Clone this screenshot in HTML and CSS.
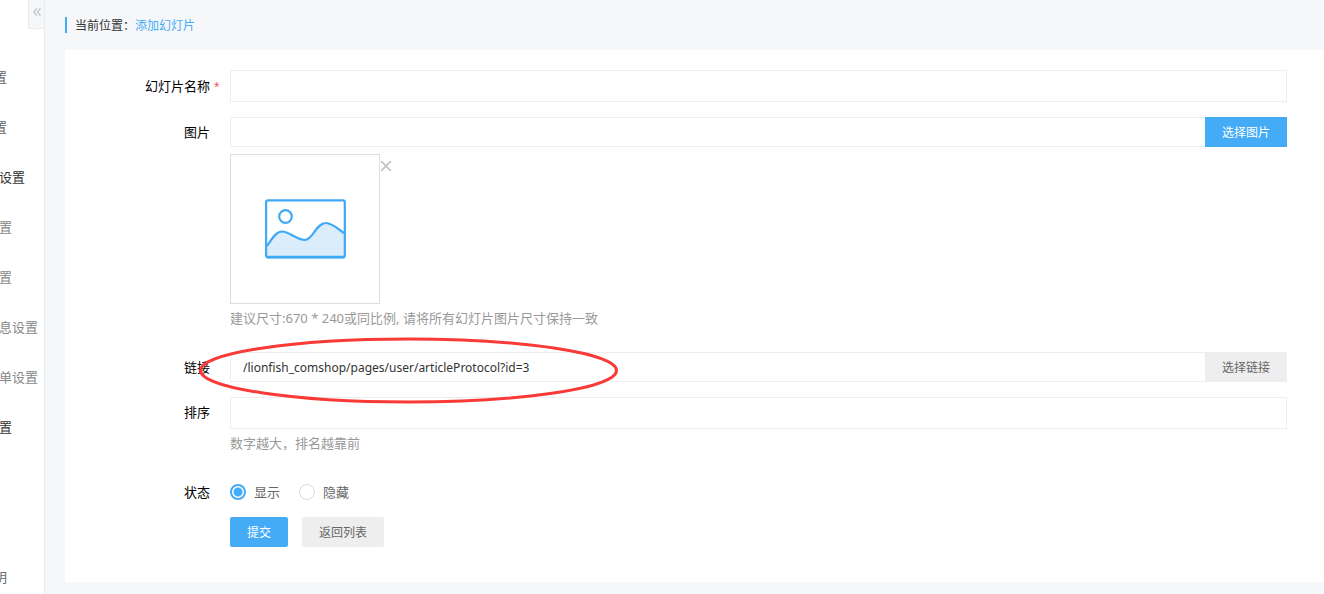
FILE: index.html
```html
<!DOCTYPE html>
<html lang="zh-CN">
<head>
<meta charset="utf-8">
<title>添加幻灯片</title>
<link rel="stylesheet" href="styles.css">
</head>
<body>
<div class="app">
  <aside class="sidebar">
    <nav class="menu">
      <a class="item short" href="#">置</a>
      <a class="item short" href="#">置</a>
      <a class="item medium group" href="#">设置</a>
      <a class="item child" href="#">置</a>
      <a class="item child" href="#">置</a>
      <a class="item long child" href="#">息设置</a>
      <a class="item long child" href="#">单设置</a>
      <a class="item group" href="#">置</a>
      <a class="item short last" href="#">明</a>
    </nav>
    <button class="collapse" type="button" aria-label="收起">
      <svg width="8" height="8" viewBox="0 0 8 8"><path d="M3.8 .3 .7 4l3.1 3.7M7.5 .3 4.4 4l3.1 3.7" fill="none" stroke="#b8c2ca" stroke-width="1.2"/></svg>
    </button>
  </aside>
  <main class="main">
    <div class="crumb"><span>当前位置：</span><a href="#">添加幻灯片</a></div>
    <form class="card">
      <div class="row middle">
        <label class="label" for="name">幻灯片名称<span class="mark">*</span></label>
        <input class="input" id="name" type="text">
      </div>
      <div class="row">
        <label class="label" for="image">图片<span class="mark"></span></label>
        <div class="field">
          <div class="group-input">
            <input class="input" id="image" type="text">
            <button class="btn primary" type="button">选择图片</button>
          </div>
          <div class="preview">
            <div class="thumb">
              <svg width="82" height="60" viewBox="0 0 82 60">
                <path d="M3 47C8 40 12 32.500 18 32.500c7 0 15 8.500 23 8.500C49 41 52 24 62 24c6 0 12 6 18 10v24H3z" fill="#dbecfb"/>
                <path d="M3 47C8 40 12 32.500 18 32.500c7 0 15 8.500 23 8.500C49 41 52 24 62 24c6 0 12 6 18 10" fill="none" stroke="#3fa9f5" stroke-width="2.2"/>
                <rect x="2.100" y="1.300" width="78.700" height="57.200" rx="2" fill="none" stroke="#3fa9f5" stroke-width="2.2"/>
                <path d="M3 58h77" stroke="#3fa9f5" stroke-width="2.600"/>
                <circle cx="21.500" cy="17.500" r="6.300" fill="none" stroke="#3fa9f5" stroke-width="2.2"/>
              </svg>
            </div>
            <button class="remove" type="button" aria-label="删除">
              <svg width="12" height="12" viewBox="0 0 12 12"><path d="M1.200 1.200l9.600 9.600M10.800 1.200l-9.600 9.600" stroke="#c4c4c4" stroke-width="1.800"/></svg>
            </button>
          </div>
          <p class="hint">建议尺寸:670 * 240或同比例, 请将所有幻灯片图片尺寸保持一致</p>
        </div>
      </div>
      <div class="row after-hint">
        <label class="label" for="link">链接<span class="mark"></span></label>
        <div class="group-input">
          <input class="input" id="link" type="text" value="/lionfish_comshop/pages/user/articleProtocol?id=3">
          <button class="btn" type="button">选择链接</button>
          <svg class="ring" width="422" height="68" viewBox="0 0 422 68"><ellipse cx="210.500" cy="33.500" rx="208" ry="31.500" fill="none" stroke="#f93a37" stroke-width="3"/></svg>
        </div>
      </div>
      <div class="row">
        <label class="label" for="sort">排序<span class="mark"></span></label>
        <div class="field">
          <input class="input" id="sort" type="text">
          <p class="hint">数字越大，排名越靠前</p>
        </div>
      </div>
      <div class="row after-hint" role="radiogroup" aria-labelledby="status">
        <span class="label" id="status">状态<span class="mark"></span></span>
        <div class="radios">
          <label class="radio"><input type="radio" name="status" checked>显示</label>
          <label class="radio"><input type="radio" name="status">隐藏</label>
        </div>
      </div>
      <div class="actions">
        <button class="btn primary" type="button">提交</button>
        <button class="btn" type="button">返回列表</button>
      </div>
    </form>
  </main>
</div>
</body>
</html>
```
FILE: styles.css
```css
* { box-sizing: border-box; }

body {
  margin: 0;
  background: #f5f7f9;
  color: #000;
  font: 13px/20px "Noto Sans", "Noto Sans CJK SC", sans-serif;
}

a { text-decoration: none; }
p { margin: 0; }
svg { display: block; }
button, input { font-family: inherit; }

.app {
  display: flex;
  min-height: 100vh;
}

.sidebar {
  position: relative;
  flex: none;
  width: 45px;
  overflow: hidden;
  background: #fff;
  border-right: 1px solid #ebebeb;
}

.menu {
  display: flex;
  flex-direction: column;
  padding-top: 52px;
}

.item {
  display: flex;
  justify-content: flex-end;
  width: 12px;
  color: #666;
  line-height: 50px;
  white-space: nowrap;
}

.item.short { width: 7px; }
.item.medium { width: 25px; }
.item.long { width: 38px; }
.item.group { color: #333; }
.item.child { color: #888; }
.item.last { margin-top: 100px; }

.collapse {
  position: absolute;
  top: 0;
  right: -1px;
  width: 17px;
  height: 29px;
  padding: 0 0 4px 4px;
  background: #f5f7f9;
  border: 1px solid #ebebeb;
  border-width: 0 0 1px 1px;
}

.main {
  flex: 1;
  min-width: 0;
  padding: 17px 0 0 20px;
}

.crumb {
  display: flex;
  height: 16px;
  margin-bottom: 17px;
  padding-left: 8px;
  border-left: 2px solid #44abf7;
  color: #333;
  font-size: 12px;
  line-height: 18px;
}

.crumb a { color: #44abf7; }

.card {
  display: flex;
  flex-direction: column;
  gap: 15px;
  padding: 20px 37px 35px 0;
  background: #fff;
}

.row {
  display: grid;
  grid-template-columns: 165px minmax(0, 1fr);
  align-items: start;
}

.row.middle { align-items: center; }
.row.after-hint { margin-top: 9px; }

.label {
  display: flex;
  justify-content: flex-end;
  line-height: 30px;
}

.mark {
  width: 20px;
  padding-left: 4px;
  color: #ed5565;
  font-size: 10px;
}

.input {
  display: block;
  width: 100%;
  height: 32px;
  padding: 0 12px;
  background: #fff;
  border: 1px solid #eee;
  color: #333;
  font-size: 12px;
}

.group-input {
  position: relative;
  display: flex;
}

.group-input .input {
  flex: 1;
  height: 30px;
  border-right: 0;
}

.btn {
  flex: none;
  height: 30px;
  padding: 0 17px;
  background: #eee;
  border: 0;
  border-radius: 2px;
  color: #666;
  font-size: 12px;
}

.group-input .btn { border-radius: 0; }
.btn.primary { background: #44abf7; color: #fff; }

.preview {
  display: flex;
  align-items: flex-start;
  margin-top: 7px;
}

.thumb {
  display: grid;
  place-items: center;
  width: 150px;
  height: 150px;
  border: 1px solid #ddd;
}

.remove {
  margin-top: 6px;
  padding: 0;
  background: none;
  border: 0;
}

.hint {
  padding-top: 4px;
  color: #999;
}

.ring {
  position: absolute;
  top: -15px;
  left: -32px;
  pointer-events: none;
}

.radios {
  display: flex;
  gap: 19px;
}

.radio {
  display: flex;
  align-items: center;
  gap: 8px;
  color: #666;
  line-height: 30px;
}

.radio input {
  appearance: none;
  width: 16px;
  height: 16px;
  margin: 0;
  background: #fff;
  border: 1px solid #ddd;
  border-radius: 50%;
}

.radio input:checked {
  border: 2px solid #44abf7;
  background: radial-gradient(circle, #44abf7 4px, #fff 5px);
}

.actions {
  display: flex;
  gap: 14px;
  margin-top: -5px;
  padding-left: 165px;
}
```
